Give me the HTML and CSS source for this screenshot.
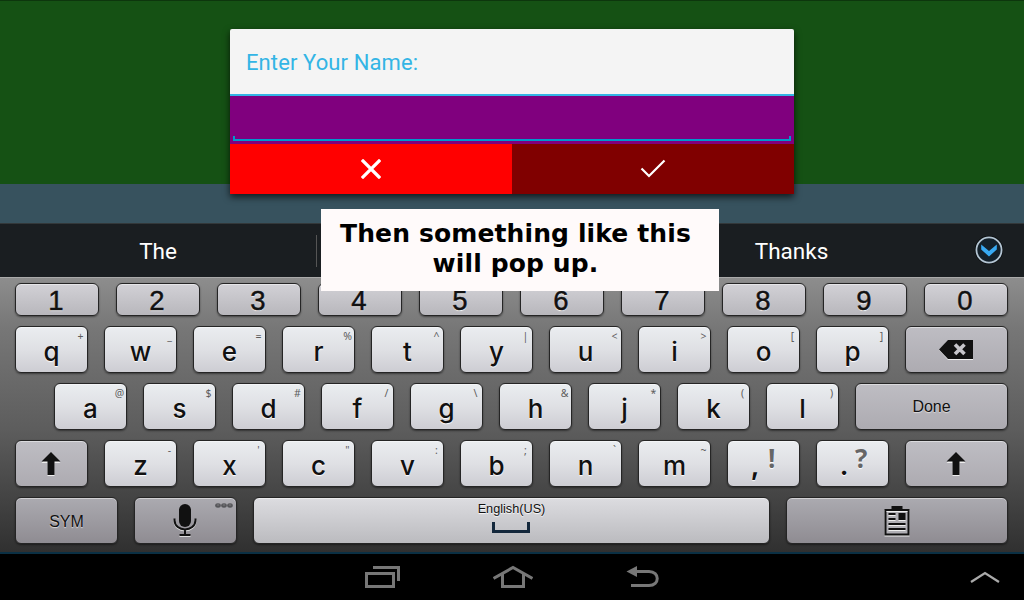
FILE: index.html
```html
<!DOCTYPE html>
<html lang="en">
<head>
<meta charset="utf-8">
<title>Enter Your Name</title>
<link rel="stylesheet" href="styles.css">
</head>
<body>
<div class="screen">
  <div class="field"></div>
  <div class="band"></div>
  <div class="suggestions">
    <div class="word first">The</div>
    <div class="word middle"></div>
    <div class="word last">Thanks</div>
    <svg class="expand" width="30" height="30" viewBox="0 0 30 30"><circle cx="15" cy="15" r="14.2" fill="#05080a"/><circle cx="15" cy="15" r="12.6" fill="#14212b" stroke="#b4c5d3" stroke-width="1.8"/><path d="M7.2 9.500v5l7.800 7 7.800-7V9.500L15 16z" fill="#38aaf4"/></svg>
  </div>

  <div class="keyboard">
    <div class="row numbers">
      <div class="key">1</div><div class="key">2</div><div class="key">3</div><div class="key">4</div><div class="key">5</div><div class="key">6</div><div class="key">7</div><div class="key">8</div><div class="key">9</div><div class="key">0</div>
    </div>
    <div class="row">
      <div class="key">q<span class="alt">+</span></div><div class="key">w<span class="alt">_</span></div><div class="key">e<span class="alt">=</span></div><div class="key">r<span class="alt">%</span></div><div class="key">t<span class="alt">^</span></div><div class="key">y<span class="alt">|</span></div><div class="key">u<span class="alt">&lt;</span></div><div class="key">i<span class="alt">&gt;</span></div><div class="key">o<span class="alt">[</span></div><div class="key">p<span class="alt">]</span></div>
      <div class="key fn wide erase"><svg width="38" height="22" viewBox="0 0 38 22"><path d="M2 12l9-9h25v19H11z" fill="#eee"/><path d="M2 11.500l9-9.500h25v19H11z" fill="#111"/><path d="M18 6.500l9.500 9.500m0-9.500l-9.500 9.500" stroke="#c6c5ca" stroke-width="3.600"/></svg></div>
    </div>
    <div class="row indent">
      <div class="key">a<span class="alt">@</span></div><div class="key">s<span class="alt">$</span></div><div class="key">d<span class="alt">#</span></div><div class="key">f<span class="alt">/</span></div><div class="key">g<span class="alt">\</span></div><div class="key">h<span class="alt">&amp;</span></div><div class="key">j<span class="alt">*</span></div><div class="key">k<span class="alt">(</span></div><div class="key">l<span class="alt">)</span></div>
      <div class="key fn done">Done</div>
    </div>
    <div class="row">
      <div class="key fn shift"><svg width="20" height="26" viewBox="0 0 20 26"><path d="M10 2l9.500 10H13.500v13h-7V12H.5z" fill="#eee"/><path d="M10 1l9.500 9.500H13.500V24h-7V10.500H.5z" fill="#111"/></svg></div>
      <div class="key">z<span class="alt">-</span></div><div class="key">x<span class="alt">'</span></div><div class="key">c<span class="alt">"</span></div><div class="key">v<span class="alt">:</span></div><div class="key">b<span class="alt">;</span></div><div class="key">n<span class="alt">`</span></div><div class="key">m<span class="alt">~</span></div><div class="key punct">,<span class="mark">!</span></div><div class="key punct">.<span class="mark">?</span></div>
      <div class="key fn wide shift"><svg width="20" height="26" viewBox="0 0 20 26"><path d="M10 2l9.500 10H13.500v13h-7V12H.5z" fill="#eee"/><path d="M10 1l9.500 9.500H13.500V24h-7V10.500H.5z" fill="#111"/></svg></div>
    </div>
    <div class="row bottom">
      <div class="key fn wide sym">SYM</div>
      <div class="key fn wide mic"><svg width="26" height="36" viewBox="0 0 26 36"><g transform="translate(0 1)" fill="none" stroke="#ddd" stroke-width="2"><path d="M2.500 15.500v1.500c0 12.500 21 12.500 21 0v-1.500M13 26v6M7.500 32h11"/></g><rect x="7" y="1" width="12" height="23" rx="6" fill="#111"/><path d="M2.500 15.500v1.500c0 12.500 21 12.500 21 0v-1.500M13 26v6M7.500 32h11" fill="none" stroke="#111" stroke-width="2"/></svg><svg class="dots" width="18" height="5" viewBox="0 0 18 5"><g fill="#56565a"><ellipse cx="3" cy="2.500" rx="2.800" ry="2.200"/><ellipse cx="9" cy="2.500" rx="2.800" ry="2.200"/><ellipse cx="15" cy="2.500" rx="2.800" ry="2.200"/></g><path d="M1.800 2h2.400m3.600 0h2.400m3.600 0h2.400" stroke="#999" stroke-width=".6"/></svg></div>
      <div class="key space"><span>English(US)</span><i class="tray"></i></div>
      <div class="key fn clip"><svg width="26" height="32" viewBox="0 0 26 32"><path d="M.5 4H25.500v26.500H.5z" fill="#eee"/><path d="M.5 3h7V0h11v3h7v26.500H.5z" fill="#111"/><path d="M2.500 5h21v22.500h-21z" fill="#b0afb4"/><path d="M2.500 5h21v1h-21z" fill="#eee"/><path d="M4.500 7h7v2h-7zm0 5h7v2h-7zm10-5h7v7h-7zm-10 10h17v2h-17zm0 5h17v2h-17z" fill="#111"/><path d="M4.500 9h7v1h-7zm0 5h7v1h-7zm10 0h7v1h-7zm-10 5h17v1h-17zm0 5h17v1h-17z" fill="#eee"/></svg></div>
    </div>
  </div>

  <div class="navbar">
    <svg class="nav recent" width="36" height="24" viewBox="0 0 36 24" fill="none" stroke="#777" stroke-width="3"><path d="M1.500 8.500h27v13h-27zM8 2.500h25.500V16"/></svg>
    <svg class="nav home" width="40" height="24" viewBox="0 0 40 24" fill="none" stroke="#777" stroke-width="3"><path d="M.5 13.500L20 2.500l19.500 11M9.500 9v12.500h21V9"/></svg>
    <svg class="nav back" width="34" height="24" viewBox="0 0 34 24"><path d="M10 6.500h13c11 0 11 14 0 14H5" fill="none" stroke="#777" stroke-width="3"/><path d="M.5 6.500L11 1v11z" fill="#777"/></svg>
    <svg class="nav up" width="30" height="14" viewBox="0 0 30 14"><path d="M1 12L15 3l14 9" fill="none" stroke="#aaa" stroke-width="2.300"/></svg>
  </div>

  <div class="dialog">
    <div class="title">Enter Your Name:</div>
    <div class="entry"><div class="line"></div></div>
    <div class="actions">
      <div class="cancel"><svg width="20" height="20" viewBox="0 0 20 20"><path d="M2 2l16 16m0-16l-16 16" stroke="#fff" stroke-width="3.200" stroke-linecap="square"/></svg></div>
      <div class="accept"><svg width="26" height="20" viewBox="0 0 26 20"><path d="M1.500 9.500l7.500 7.500L24.500 1.500" fill="none" stroke="#fff" stroke-width="2.200"/></svg></div>
    </div>
  </div>
  <div class="caption">Then something like this<br>will pop up.</div>
</div>
</body>
</html>
```
FILE: styles.css
```css
* { box-sizing: border-box; }
body { margin: 0; background: #000; }
svg { display: block; flex: none; }
.screen {
  position: relative;
  width: 1024px;
  height: 600px;
  overflow: hidden;
  display: flex;
  flex-direction: column;
  font-family: "Liberation Sans", Arial, sans-serif;
}
.field { height: 184px; background: #155114; border-top: 1px solid #0d360d; }
.band { height: 39px; background: #37525e; }
.suggestions {
  height: 54px;
  display: flex;
  align-items: center;
  background: #1a1e21;
  border-top: 1px solid #33383a;
  color: #fff;
  font: 22.5px/54px Roboto, sans-serif;
}
.word { text-align: center; }
.first { width: 317px; height: 32px; line-height: 32px; border-right: 1px solid #555; }
.middle { width: 350px; }
.last { width: 249px; line-height: 32px; }
.expand { margin: -2px 0 0 58px; }

.keyboard {
  height: 277px;
  padding: 5px 16px 0 15px;
  display: flex;
  flex-direction: column;
  gap: 10px;
  background: linear-gradient(#8d8d8d, #777 18%, #5d5d5d 55%, #303030);
  border-top: 1px solid #aaa;
  border-bottom: 2px solid #0b3044;
}
.row { display: flex; gap: 16px; height: 47px; }
.row.numbers { height: 33px; gap: 17px; }
.indent { padding-left: 39px; }
.key {
  position: relative;
  width: 73px;
  display: flex;
  justify-content: center;
  border: 1px solid #252525;
  border-radius: 6px;
  background: linear-gradient(#eaedf0, #dfe0e4 50%, #cdcdd3);
  box-shadow: 0 1px 2px rgba(0,0,0,.45), inset 0 1px 0 rgba(255,255,255,.45);
  color: #111;
  font: 500 26px/49px Inter, sans-serif;
  text-shadow: 0 1px 1px #fff;
}
.numbers .key {
  width: 84px;
  background: linear-gradient(#d2d1d6, #b8b7bc);
  font: 27.5px/34px "Liberation Sans", Arial, sans-serif;
  padding-right: 2px;
  -webkit-text-stroke: .5px #111;
}
.alt {
  position: absolute;
  top: 2px;
  right: 1px;
  width: 11px;
  display: flex;
  justify-content: center;
  font: 10.5px/15px "Noto Sans", sans-serif;
  color: #5d5d5d;
  text-shadow: none;
}
.key.fn {
  align-items: center;
  background: linear-gradient(#bebdc3, #adabb1);
  font: 16px/44px "Liberation Sans", Arial, sans-serif;
  text-shadow: 0 1px 1px #ddd;
}
.key.wide { width: 103px; }
.key.done { width: 153px; }
.key.erase { padding-bottom: 2px; padding-right: 1px; }
.key.shift { padding-right: 1px; }
.key.sym { padding-top: 3px; }
.key.mic { padding-right: 2px; }
.bottom .key.fn { background: linear-gradient(#abaab0, #8f8c92); }
.key.space {
  width: 517px;
  flex-direction: column;
  justify-content: flex-start;
  align-items: center;
  padding-top: 4px;
  background: linear-gradient(#dcdce0, #bbbbbf);
  font: 12.700px/15px "Liberation Sans", Arial, sans-serif;
}
.space span { height: 15px; }
.tray { width: 38px; height: 11px; margin: 5px 2px 0 0; border: 3px solid #14283c; border-top: 0; }
.key.clip { width: 222px; padding-top: 2px; }
.dots { position: absolute; top: 5px; right: 3px; }
.punct { padding-right: 17px; font-weight: 700; }
.mark { position: absolute; left: 38px; top: 0; font: 700 26px/35px "Open Sans", sans-serif; color: #666; }
.key.punct:nth-last-child(3) .mark { left: 40px; }

.navbar { height: 46px; display: flex; align-items: center; background: #000; padding-left: 365px; }
.home { margin-left: 92px; }
.back { margin-left: 93px; }
.up { margin-left: 310px; }

.dialog {
  position: absolute;
  left: 230px;
  top: 29px;
  width: 564px;
  height: 165px;
  border-radius: 2px 2px 0 0;
  overflow: hidden;
  box-shadow: 0 3px 7px rgba(0,0,0,.7);
}
.title {
  height: 67px;
  padding-left: 16px;
  background: #f4f4f4;
  border-bottom: 2px solid #33b5e5;
  color: #33b5e5;
  font: 22px/67px Roboto, sans-serif;
  letter-spacing: .1px;
}
.entry { height: 48px; padding: 40px 3px 3px; background: #80007e; }
.line {
  height: 5px;
  background:
    linear-gradient(#0099cc, #0099cc) 0 0 / 2px 5px no-repeat,
    linear-gradient(#0099cc, #0099cc) 100% 0 / 2px 5px no-repeat,
    linear-gradient(#0099cc, #0099cc) 0 100% / 100% 2px no-repeat;
}
.actions { display: flex; height: 50px; }
.cancel, .accept { flex: 1; display: flex; align-items: center; justify-content: center; }
.cancel { background: #f00; }
.accept { background: #800000; }
.caption {
  position: absolute;
  left: 321px;
  top: 209px;
  width: 398px;
  height: 82px;
  padding: 10px 9px 0 0;
  background: #fffafa;
  color: #000;
  text-align: center;
  font: 700 25px/30px "DejaVu Sans", sans-serif;
  letter-spacing: .12px;
}
```
